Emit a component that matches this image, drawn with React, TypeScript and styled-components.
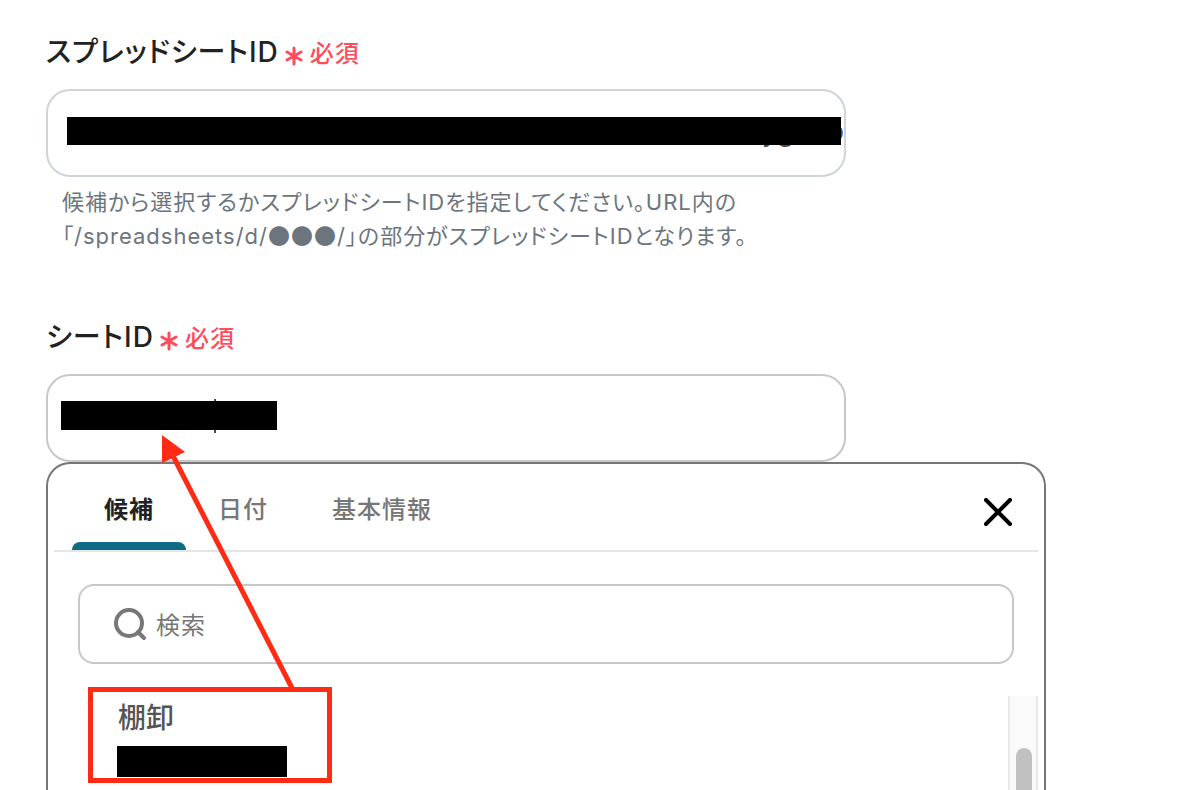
import React from "react";
import styled, { createGlobalStyle } from "styled-components";

const GlobalStyle = createGlobalStyle`
  *, *::before, *::after { box-sizing: border-box; }
  body {
    margin: 0;
    background: #fff;
    color: #222;
    font-family: Inter, "Noto Sans CJK JP", sans-serif;
    font-feature-settings: "palt";
    letter-spacing: 1px;
    overflow: hidden;
  }
  button, input { font: inherit; letter-spacing: inherit; font-feature-settings: inherit; }
`;

const Page = styled.main`
  display: flex;
  flex-direction: column;
  height: 100vh;
  padding: 32px 46px 0;
`;

const Field = styled.section<{ $gap?: number }>`
  flex: none;
  max-width: 800px;
  margin-bottom: ${(p) => p.$gap ?? 0}px;
`;

const LabelRow = styled.div`
  display: flex;
  align-items: center;
  gap: 6px;
  height: 40px;
  margin-bottom: 17px;
`;

const Label = styled.label`
  font-size: 28px;
  line-height: 40px;
  font-weight: 500;
`;

const Required = styled.span`
  display: flex;
  align-items: center;
  gap: 7px;
  padding-top: 4px;
  color: #ff4b5c;
  font-size: 24px;
  line-height: 36px;
  font-weight: 500;

  svg { margin-top: 4px; }
`;

const InputWrap = styled.div`
  position: relative;
`;

const TextInput = styled.input<{ $border: string; $alignEnd?: boolean }>`
  display: block;
  width: 100%;
  height: 88px;
  padding: 0 0 4px 18px;
  border: 2px solid ${(p) => p.$border};
  border-radius: 24px;
  background: #fff;
  color: #444b53;
  font-size: 28px;
  letter-spacing: 0;
  text-align: ${(p) => (p.$alignEnd ? "right" : "left")};
  outline: none;
`;

const Redaction = styled.span<{ $width: string; $height: number }>`
  display: block;
  width: ${(p) => p.$width};
  height: ${(p) => p.$height}px;
  background: #000;
`;

const InputCover = styled.div<{ $top: number; $left: number; $right: number }>`
  position: absolute;
  inset: ${(p) => `${p.$top}px ${p.$right}px auto ${p.$left}px`};
  pointer-events: none;
`;

const Caret = styled.span`
  position: absolute;
  left: 168px;
  top: 25px;
  width: 2px;
  height: 34px;
  background: #444b53;
`;

const Help = styled.p`
  margin: 8px 0 0;
  padding: 0 16px;
  color: #6c757d;
  font-size: 22px;
  line-height: 34px;
`;

const Dots = styled.span`
  font-family: "Noto Sans CJK JP", sans-serif;
  line-height: 1;
`;

const Panel = styled.section`
  position: relative;
  display: flex;
  flex: 1;
  flex-direction: column;
  min-height: 0;
  width: 100%;
  max-width: 1000px;
  padding: 0 6px;
  border: 2px solid #777;
  border-bottom: 0;
  border-radius: 24px 24px 0 0;
  background: #fff;
`;

const PanelHeader = styled.header`
  display: flex;
  flex: none;
  align-items: center;
  justify-content: space-between;
  height: 88px;
  padding: 0 20px 0 18px;
  border-bottom: 2px solid #e5e5e5;
`;

const Tabs = styled.div`
  display: flex;
  align-self: stretch;
`;

const Tab = styled.button<{ $active?: boolean }>`
  position: relative;
  padding: 6px 32px 0;
  border: 0;
  background: none;
  color: ${(p) => (p.$active ? "#222" : "#777")};
  font-size: 24px;
  font-weight: ${(p) => (p.$active ? 600 : 500)};
  line-height: 36px;

  &::after {
    content: "";
    position: absolute;
    inset: auto 0 0;
    height: 8px;
    border-radius: 8px 8px 0 0;
    background: ${(p) => (p.$active ? "#106b85" : "transparent")};
  }
`;

const CloseButton = styled.button`
  display: grid;
  place-items: center;
  width: 40px;
  height: 40px;
  margin-top: 10px;
  padding: 0;
  border: 0;
  background: none;
`;

const SearchBox = styled.label`
  display: flex;
  flex: none;
  align-items: center;
  gap: 9px;
  height: 80px;
  margin: 32px 24px;
  padding: 0 33px;
  border: 2px solid #c8c8c8;
  border-radius: 16px;
`;

const SearchInput = styled.input`
  flex: 1;
  min-width: 0;
  padding: 4px 0 0;
  border: 0;
  outline: none;
  background: none;
  font-size: 24px;
  line-height: 36px;

  &::placeholder { color: #777; opacity: 1; }
`;

const ListArea = styled.div`
  display: flex;
  flex: 1;
  min-height: 0;
  overflow: hidden;
`;

const List = styled.div`
  flex: 1;
`;

const Option = styled.button`
  display: block;
  width: 100%;
  padding: 2px 64px 0;
  border: 0;
  background: none;
  color: #555;
  font-size: 28px;
  font-weight: 500;
  line-height: 40px;
  letter-spacing: 0;
  text-align: left;
`;

const OptionValue = styled.span`
  display: block;
  margin: 8px 0 0 -1px;
`;

const ScrollTrack = styled.div`
  width: 30px;
  padding: 52px 6px 0;
  border: solid #e8e8e8;
  border-width: 0 2px;
  background: #fafafa;
`;

const ScrollThumb = styled.div`
  width: 16px;
  height: 120px;
  border-radius: 8px;
  background: #c1c1c1;
`;

const Highlight = styled.div`
  position: absolute;
  left: 40px;
  top: 223px;
  width: 244px;
  height: 96px;
  border: 5px solid #ff2b14;
  pointer-events: none;
`;

const Arrow = styled.svg`
  position: absolute;
  left: 112px;
  top: -32px;
  pointer-events: none;
`;

const RequiredMark = () => (
  <Required>
    <svg width="18" height="20" viewBox="0 0 18 20" fill="none" stroke="currentColor" strokeWidth="3" strokeLinecap="round" aria-hidden="true">
      <path d="M9 2v16M2 6l14 8M16 6L2 14" />
    </svg>
    必須
  </Required>
);

export default function App() {
  return (
    <>
      <GlobalStyle />
      <Page>
        <Field $gap={64}>
          <LabelRow>
            <Label htmlFor="spreadsheet-id">スプレッドシートID</Label>
            <RequiredMark />
          </LabelRow>
          <InputWrap>
            <TextInput id="spreadsheet-id" $border="#ced4da" $alignEnd defaultValue={"yg\u2003\u2009o"} />
            <InputCover $top={28} $left={21} $right={5}>
              <Redaction $width="100%" $height={28} />
            </InputCover>
          </InputWrap>
          <Help>
            候補から選択するかスプレッドシートIDを指定してください。URL内の
            <br />
            「/spreadsheets/d/<Dots>●●●</Dots>/」の部分がスプレッドシートIDとなります。
          </Help>
        </Field>

        <Field>
          <LabelRow>
            <Label htmlFor="sheet-id">シートID</Label>
            <RequiredMark />
          </LabelRow>
          <InputWrap>
            <TextInput id="sheet-id" $border="#c8c8c8" />
            <Caret />
            <InputCover $top={27} $left={15} $right={5}>
              <Redaction $width="216px" $height={29} />
            </InputCover>
          </InputWrap>
        </Field>

        <Panel>
          <PanelHeader>
            <Tabs role="tablist">
              <Tab role="tab" aria-selected $active>候補</Tab>
              <Tab role="tab">日付</Tab>
              <Tab role="tab">基本情報</Tab>
            </Tabs>
            <CloseButton aria-label="閉じる">
              <svg width="28" height="28" viewBox="0 0 28 28" fill="none" stroke="#000" strokeWidth="4" strokeLinecap="round">
                <path d="M2 2l24 24M26 2L2 26" />
              </svg>
            </CloseButton>
          </PanelHeader>
          <SearchBox>
            <svg width="34" height="34" viewBox="0 0 34 34" fill="none" stroke="#777" strokeWidth="4" strokeLinecap="round" aria-hidden="true">
              <circle cx="16" cy="16" r="13" />
              <path d="M25 25l6 6" />
            </svg>
            <SearchInput type="text" placeholder="検索" aria-label="検索" />
          </SearchBox>
          <ListArea>
            <List>
              <Option>
                棚卸
                <OptionValue>
                  <Redaction $width="170px" $height={31} />
                </OptionValue>
              </Option>
            </List>
            <ScrollTrack>
              <ScrollThumb />
            </ScrollTrack>
          </ListArea>
          <Highlight />
          <Arrow width="140" height="260" viewBox="0 0 140 260" aria-hidden="true">
            <path d="M12 22L132 256" stroke="#ff2b14" strokeWidth="5" />
            <path d="M2 3L25 20L2 31Z" fill="#ff2b14" />
          </Arrow>
        </Panel>
      </Page>
    </>
  );
}
